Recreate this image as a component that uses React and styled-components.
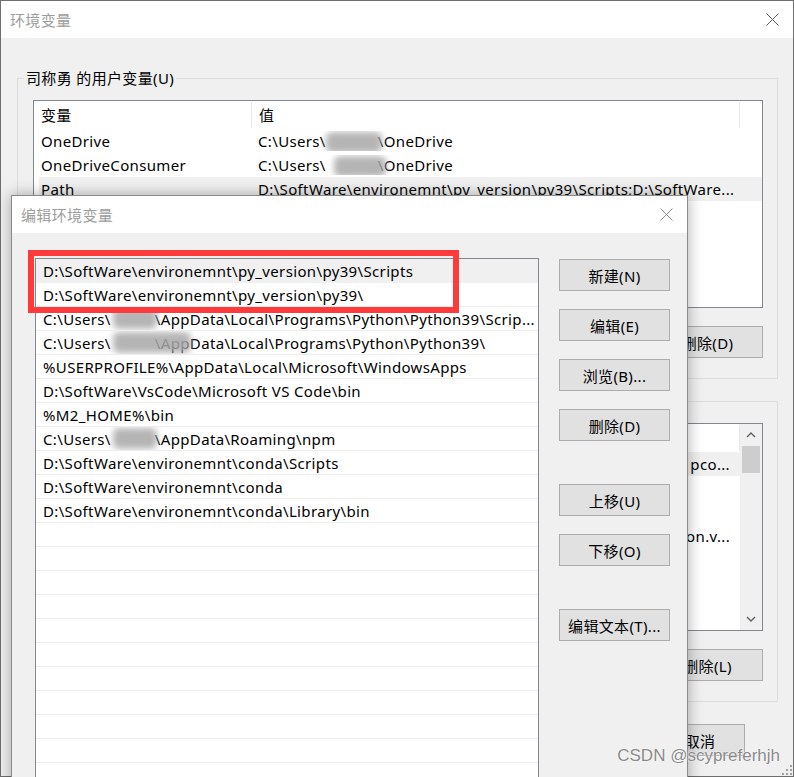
import React from "react";
import styled, { createGlobalStyle } from "styled-components";

const GlobalStyle = createGlobalStyle`
  body {
    margin: 0;
    background: #f0f0f0;
  }
`;

const FONT = `"Noto Sans", "Noto Sans CJK SC", sans-serif`;

const Screen = styled.div`
  position: relative;
  width: 794px;
  height: 777px;
  overflow: hidden;
  font-family: ${FONT};
  font-size: 15px;
  letter-spacing: 0.35px;
  color: #000;
`;

const Window = styled.div`
  position: relative;
  box-sizing: border-box;
  width: 100%;
  height: 100%;
  border: 1px solid #6e6e6e;
  background: #f0f0f0;
  display: flex;
  flex-direction: column;
`;

const TitleBar = styled.div`
  flex: none;
  height: 37px;
  background: #fff;
  display: flex;
  align-items: center;
  justify-content: space-between;
  padding: 0 ${(p) => p.$right}px 0 ${(p) => p.$left}px;
`;

const Title = styled.span`
  color: #9d9d9d;
  font-size: 15px;
`;

const OuterBody = styled.div`
  display: flex;
  flex-direction: column;
  padding: 30px 15px 0 16px;
`;

const Group = styled.fieldset`
  margin: ${(p) => p.$top || 0}px 0 0 0;
  min-width: 0;
  border: 1px solid #dcdcdc;
  padding: 12px 14px 20px 15px;
`;

const Legend = styled.legend`
  padding: 0 2px;
  margin-left: -9px;
  line-height: 20px;
  font-size: 15px;
`;

const VarList = styled.div`
  box-sizing: border-box;
  height: 208px;
  border: 1px solid #828790;
  background: #fff;
  display: flex;
  overflow: hidden;
`;

const VarTable = styled.div`
  flex: 1;
  min-width: 0;
`;

const HeaderRow = styled.div`
  display: grid;
  grid-template-columns: 218px 488px;
  height: 28px;
  align-items: center;
`;

const HeaderCell = styled.div`
  height: 26px;
  line-height: 26px;
  padding-left: 7px;
  border-right: 1px solid #e5e5e5;
`;

const VarRow = styled.div`
  display: grid;
  grid-template-columns: 212px 487px;
  height: 24px;
  margin-left: 5px;
  align-items: center;
  background: ${(p) => (p.$selected ? "#f0f0f0" : "transparent")};
`;

const NameCell = styled.div`
  padding-left: 2px;
  white-space: nowrap;
  overflow: hidden;
`;

const ValueCell = styled.div`
  display: flex;
  justify-content: ${(p) => (p.$clip ? "flex-end" : "flex-start")};
  padding: 0 8px 0 7px;
  white-space: nowrap;
  overflow: hidden;
`;

const Scrollbar = styled.div`
  flex: none;
  width: 22px;
  background: #f0f0f0;
  display: flex;
  flex-direction: column;
  align-items: center;
`;

const ArrowBox = styled.div`
  height: 22px;
  width: 100%;
  display: flex;
  align-items: center;
  justify-content: center;
`;

const Thumb = styled.div`
  width: 18px;
  height: 27px;
  background: #cdcdcd;
`;

const Spacer = styled.div`
  flex: 1;
`;

const ButtonRow = styled.div`
  display: flex;
  justify-content: flex-end;
  gap: 10px;
  margin-top: ${(p) => p.$top}px;
  padding-right: ${(p) => p.$right || 0}px;
`;

const Button = styled.button`
  flex: none;
  box-sizing: border-box;
  width: ${(p) => p.$w || 111}px;
  height: 32px;
  margin-top: ${(p) => p.$gap || 0}px;
  padding: 0;
  border: 1px solid #adadad;
  background: #e1e1e1;
  font-family: ${FONT};
  font-size: 15px;
  letter-spacing: 0.35px;
  color: #000;
`;

const Dialog = styled.div`
  position: absolute;
  left: 11px;
  top: 195px;
  width: 677px;
  height: 620px;
  box-sizing: border-box;
  border: 1px solid #8a8a8a;
  background: #f0f0f0;
  box-shadow: 0 0 14px rgba(0, 0, 0, 0.32);
  display: flex;
  flex-direction: column;
`;

const DialogBody = styled.div`
  display: flex;
  gap: 20px;
  padding: 25px 17px 0 23px;
`;

const PathList = styled.div`
  flex: none;
  box-sizing: border-box;
  width: 504px;
  height: 580px;
  border: 1px solid #828790;
  background: #fff;
  overflow: hidden;
`;

const PathRow = styled.div`
  box-sizing: border-box;
  height: 24px;
  padding-left: 7px;
  display: flex;
  align-items: center;
  white-space: nowrap;
  overflow: hidden;
  border-bottom: 1px solid ${(p) => (p.$selected ? "#f0f0f0" : "#ececec")};
  background: ${(p) => (p.$selected ? "#f0f0f0" : "#fff")};
`;

const ButtonColumn = styled.div`
  flex: none;
  width: 111px;
  display: flex;
  flex-direction: column;
  padding-top: 1px;
`;

const Highlight = styled.div`
  position: absolute;
  left: 16px;
  top: 54px;
  width: 431px;
  height: 63px;
  box-sizing: border-box;
  border: 6px solid #ff3a3a;
  pointer-events: none;
`;

const Smudge = styled.span`
  position: relative;
  display: inline-block;
  width: ${(p) => p.$w}px;
  height: 1em;
  vertical-align: middle;
  &::before {
    content: "";
    position: absolute;
    left: ${(p) => -(p.$l || 0)}px;
    right: ${(p) => -(p.$r || 0)}px;
    top: -3px;
    bottom: -3px;
    background: #a9a9a9;
    border-radius: 6px;
    filter: blur(3px);
    opacity: 0.85;
  }
`;

const Watermark = styled.div`
  position: absolute;
  right: 14px;
  top: 746px;
  font-family: "Liberation Sans", Arial, sans-serif;
  font-size: 17px;
  line-height: 20px;
  letter-spacing: 0;
  color: #8a8a8a;
  text-shadow: 0 0 2px #fff, 0 0 1px #fff;
`;

const Grip = styled.svg`
  position: absolute;
  right: 1px;
  bottom: 1px;
`;

const CloseIcon = ({ color }) => (
  <svg width="13" height="13" viewBox="0 0 13 13">
    <path d="M0.5 0.5 L12.5 12.5 M12.5 0.5 L0.5 12.5" stroke={color} strokeWidth="1" fill="none" />
  </svg>
);

const Chevron = ({ down }) => (
  <svg width="10" height="6" viewBox="0 0 10 6">
    <polyline
      points={down ? "1,1 5,5 9,1" : "1,5 5,1 9,5"}
      stroke="#606060"
      strokeWidth="1.4"
      fill="none"
    />
  </svg>
);

const userVars = [
  { name: "OneDrive", value: <>C:\Users\<Smudge $w={52} $r={4} />\OneDrive</> },
  { name: "OneDriveConsumer", value: <>C:\Users\<Smudge $w={52} $l={-8} $r={8} />\OneDrive</> },
  {
    name: "Path",
    value: "D:\\SoftWare\\environemnt\\py_version\\py39\\Scripts;D:\\SoftWare...",
    selected: true,
  },
  { name: "TEMP", value: "%USERPROFILE%\\AppData\\Local\\Temp" },
  { name: "TMP", value: "%USERPROFILE%\\AppData\\Local\\Temp" },
];

const systemVars = [
  {
    name: "CLASSPATH",
    value: ".;%JAVA_HOME%\\lib;%JAVA_HOME%\\lib\\tools.jar;D:\\SoftWare\\ pco...",
    selected: true,
    clip: true,
  },
  { name: "ComSpec", value: "C:\\WINDOWS\\system32\\cmd.exe" },
  { name: "DriverData", value: "C:\\Windows\\System32\\Drivers\\DriverData" },
  {
    name: "JAVA_HOME",
    value: "D:\\SoftWare\\environemnt\\Java\\jdk1.8.0_301\\bin\\java\\versi on.v...",
    clip: true,
  },
  { name: "M2_HOME", value: "D:\\SoftWare\\apache-maven-3.8.1" },
  { name: "NUMBER_OF_PROCESSORS", value: "8" },
  { name: "OS", value: "Windows_NT" },
  { name: "Path", value: "C:\\WINDOWS\\system32;C:\\WINDOWS" },
];

const paths = [
  { text: "D:\\SoftWare\\environemnt\\py_version\\py39\\Scripts", selected: true },
  { text: "D:\\SoftWare\\environemnt\\py_version\\py39\\" },
  {
    text: (
      <>
        C:\Users\<Smudge $w={44} $l={-2} $r={2} />\AppData\Local\Programs\Python\Python39\Scrip...
      </>
    ),
  },
  {
    text: (
      <>
        C:\Users\<Smudge $w={44} $l={-2} $r={36} />\AppData\Local\Programs\Python\Python39\
      </>
    ),
  },
  { text: "%USERPROFILE%\\AppData\\Local\\Microsoft\\WindowsApps" },
  { text: "D:\\SoftWare\\VsCode\\Microsoft VS Code\\bin" },
  { text: "%M2_HOME%\\bin" },
  {
    text: (
      <>
        C:\Users\<Smudge $w={44} $l={-2} $r={2} />\AppData\Roaming\npm
      </>
    ),
  },
  { text: "D:\\SoftWare\\environemnt\\conda\\Scripts" },
  { text: "D:\\SoftWare\\environemnt\\conda" },
  { text: "D:\\SoftWare\\environemnt\\conda\\Library\\bin" },
  ...Array.from({ length: 14 }, () => ({ text: "" })),
];

const VariableList = ({ rows, scroll }) => (
  <VarList>
    <VarTable>
      <HeaderRow>
        <HeaderCell>变量</HeaderCell>
        <HeaderCell>值</HeaderCell>
      </HeaderRow>
      {rows.map((r, i) => (
        <VarRow key={i} $selected={r.selected}>
          <NameCell>{r.name}</NameCell>
          <ValueCell $clip={r.clip}>
            <span>{r.value}</span>
          </ValueCell>
        </VarRow>
      ))}
    </VarTable>
    {scroll && (
      <Scrollbar>
        <ArrowBox>
          <Chevron />
        </ArrowBox>
        <Thumb />
        <Spacer />
        <ArrowBox>
          <Chevron down />
        </ArrowBox>
      </Scrollbar>
    )}
  </VarList>
);

export default function App() {
  return (
    <Screen>
      <GlobalStyle />
      <Window>
        <TitleBar $left={9} $right={14}>
          <Title>环境变量</Title>
          <CloseIcon color="#5c5c5c" />
        </TitleBar>
        <OuterBody>
          <Group>
            <Legend>司称勇 的用户变量(U)</Legend>
            <VariableList rows={userVars} />
            <ButtonRow $top={18}>
              <Button>新建(N)...</Button>
              <Button>编辑(E)...</Button>
              <Button>删除(D)</Button>
            </ButtonRow>
          </Group>
          <Group $top={12}>
            <Legend>系统变量(S)</Legend>
            <VariableList rows={systemVars} scroll />
            <ButtonRow $top={18}>
              <Button>新建(W)...</Button>
              <Button>编辑(I)...</Button>
              <Button>删除(L)</Button>
            </ButtonRow>
          </Group>
          <ButtonRow $top={22} $right={33}>
            <Button $w={90}>确定</Button>
            <Button $w={90}>取消</Button>
          </ButtonRow>
        </OuterBody>
        <Grip width="11" height="11" viewBox="0 0 11 11">
          {[
            [9, 1],
            [9, 5],
            [5, 5],
            [9, 9],
            [5, 9],
            [1, 9],
          ].map(([x, y], i) => (
            <rect key={i} x={x} y={y} width="2" height="2" fill="#a0a0a0" />
          ))}
        </Grip>
      </Window>

      <Dialog>
        <TitleBar $left={9} $right={14}>
          <Title>编辑环境变量</Title>
          <CloseIcon color="#8c8c8c" />
        </TitleBar>
        <DialogBody>
          <PathList>
            {paths.map((p, i) => (
              <PathRow key={i} $selected={p.selected}>
                {p.text}
              </PathRow>
            ))}
          </PathList>
          <ButtonColumn>
            <Button>新建(N)</Button>
            <Button $gap={18}>编辑(E)</Button>
            <Button $gap={18}>浏览(B)...</Button>
            <Button $gap={18}>删除(D)</Button>
            <Button $gap={43}>上移(U)</Button>
            <Button $gap={18}>下移(O)</Button>
            <Button $gap={43}>编辑文本(T)...</Button>
          </ButtonColumn>
        </DialogBody>
        <Highlight />
      </Dialog>

      <Watermark>CSDN @scypreferhjh</Watermark>
    </Screen>
  );
}
